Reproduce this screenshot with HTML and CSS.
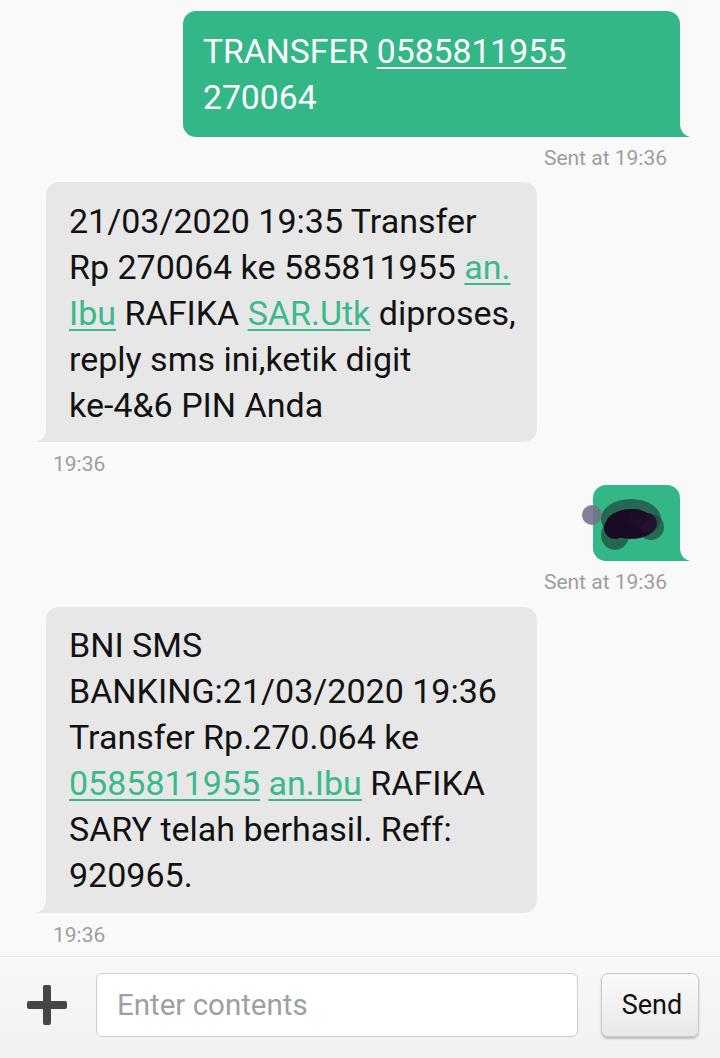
FILE: index.html
```html
<!DOCTYPE html>
<html lang="id">
<head>
<meta charset="utf-8">
<title>Messages</title>
<link rel="stylesheet" href="styles.css">
</head>
<body>
<div class="screen">
  <main class="thread">
    <div class="msg out">
      <div class="bubble out-bubble b-transfer">TRANSFER <span class="link">0585811955</span><br>270064<svg class="tail tail-out" width="11" height="14" viewBox="0 0 11 14"><path d="M0 0 C0 8 4 13 11 14 L0 14 Z"/></svg></div>
      <div class="meta">Sent at 19:36</div>
    </div>

    <div class="msg in m-first">
      <div class="bubble in-bubble b-in1">21/03/2020 19:35 Transfer<br>Rp 270064 ke 585811955 <span class="link">an.</span><br><span class="link">Ibu</span> RAFIKA <span class="link">SAR.Utk</span> diproses,<br>reply sms ini,ketik digit<br>ke-4&amp;6 PIN Anda<svg class="tail tail-in" width="11" height="14" viewBox="0 0 11 14"><path d="M11 0 C11 8 7 13 0 14 L11 14 Z"/></svg></div>
      <div class="meta">19:36</div>
    </div>

    <div class="msg out m-pin">
      <div class="bubble out-bubble b-pin"><svg class="scribble" width="110" height="76" viewBox="-20 0 110 76">
          <circle cx="-1" cy="30" r="10" fill="#76718a" opacity="0.9"/>
          <ellipse cx="38" cy="34" rx="30" ry="20" fill="#1f4a3b" opacity="0.72"/>
          <ellipse cx="22" cy="50" rx="14" ry="15" fill="#1f4a3b" opacity="0.72"/>
          <ellipse cx="58" cy="42" rx="13" ry="13" fill="#1f4a3b" opacity="0.7"/>
          <ellipse cx="38" cy="39" rx="25" ry="15" fill="#1a0b25"/>
          <circle cx="22" cy="43" r="11" fill="#1a0b25"/>
          <circle cx="54" cy="38" r="10" fill="#241030"/>
          <circle cx="44" cy="33" r="9" fill="#1d0d28"/>
        </svg><svg class="tail tail-out" width="11" height="14" viewBox="0 0 11 14"><path d="M0 0 C0 8 4 13 11 14 L0 14 Z"/></svg></div>
      <div class="meta">Sent at 19:36</div>
    </div>

    <div class="msg in m-last">
      <div class="bubble in-bubble b-in2">BNI SMS<br>BANKING:21/03/2020 19:36<br>Transfer Rp.270.064 ke<br><span class="link">0585811955</span> <span class="link">an.Ibu</span> RAFIKA<br>SARY telah berhasil. Reff:<br>920965.<svg class="tail tail-in" width="11" height="14" viewBox="0 0 11 14"><path d="M11 0 C11 8 7 13 0 14 L11 14 Z"/></svg></div>
      <div class="meta">19:36</div>
    </div>
  </main>

  <footer class="composer">
    <svg class="plus" width="40" height="40" viewBox="0 0 40 40"><rect x="0" y="16" width="40" height="8" rx="2"/><rect x="16" y="0" width="8" height="40" rx="2"/></svg>
    <input class="field" type="text" placeholder="Enter contents">
    <button class="send" type="button">Send</button>
  </footer>
</div>
</body>
</html>
```

FILE: styles.css
```css
html, body {
  margin: 0;
  padding: 0;
}

body {
  background: #f9f9f9;
  font-family: Roboto, "Noto Sans", "Liberation Sans", sans-serif;
}

.screen {
  height: 1058px;
  display: flex;
  flex-direction: column;
  overflow: hidden;
}

.thread {
  flex: 1;
  display: flex;
  flex-direction: column;
  padding-top: 11px;
}

.msg {
  display: flex;
  flex-direction: column;
}

.msg.out {
  align-items: flex-end;
  padding-right: 40px;
}

.msg.in {
  align-items: flex-start;
  padding-left: 46px;
}

.m-first { margin-top: 10px; }
.m-pin { margin-top: 7px; }
.m-last { margin-top: 11px; }

.bubble {
  position: relative;
  box-sizing: border-box;
  font-size: 34px;
  line-height: 46px;
  white-space: nowrap;
}

.out-bubble {
  background: #33b787;
  color: #ffffff;
  border-radius: 13px 13px 0 13px;
}

.out-bubble .tail { fill: #33b787; }

.in-bubble {
  background: #e7e7e7;
  color: #121212;
  border-radius: 13px 13px 13px 0;
  width: 491px;
  padding: 16px 20px 14px 23px;
}

.in-bubble .tail { fill: #e7e7e7; }

.b-transfer {
  width: 497px;
  padding: 18px 20px 16px 20px;
  font-size: 33.7px;
}

.b-in2 {
  padding-top: 15px;
  padding-bottom: 15px;
}

.b-pin {
  width: 87px;
  height: 76px;
}

.tail {
  position: absolute;
  bottom: 0;
}

.tail-out { right: -11px; }
.tail-in { left: -11px; }

.scribble {
  position: absolute;
  left: -20px;
  top: 0;
  overflow: visible;
}

.link {
  text-decoration: underline;
  text-decoration-thickness: 2px;
  text-underline-offset: 4px;
}

.in-bubble .link {
  color: #3aba8b;
}

.meta {
  font-size: 21px;
  line-height: 28px;
  color: #9e9e9e;
}

.msg.out .meta {
  margin-top: 7px;
  margin-right: 13px;
}

.m-pin .meta { margin-top: 6px; }

.msg.in .meta {
  margin-top: 8px;
  margin-left: 7px;
}

.m-last .meta { margin-top: 7px; }

.composer {
  height: 102px;
  box-sizing: border-box;
  border-top: 1px solid #e9e9e9;
  background: linear-gradient(#f8f8f8, #f1f1f1);
  display: flex;
  align-items: center;
  padding: 0 21px 5px 27px;
}

.plus {
  flex: none;
  fill: #464646;
}

.field {
  flex: 1;
  min-width: 0;
  height: 64px;
  box-sizing: border-box;
  margin-left: 29px;
  border: 1.5px solid #cdcdcd;
  border-radius: 6px;
  background: #ffffff;
  padding: 0 0 0 20px;
  font-family: Roboto, "Noto Sans", sans-serif;
  font-size: 29.5px;
  color: #222;
  outline: none;
}

.field::placeholder {
  color: #a0a0a0;
}

.send {
  flex: none;
  width: 98px;
  height: 64px;
  margin-left: 23px;
  border: 1px solid #c9c9c9;
  border-radius: 7px;
  background: linear-gradient(#fafafa, #e8e8e8);
  box-shadow: 0 2px 2px rgba(0, 0, 0, 0.22);
  font-family: Roboto, "Noto Sans", sans-serif;
  font-size: 27px;
  color: #111;
  padding: 0 0 0 4px;
}
```
